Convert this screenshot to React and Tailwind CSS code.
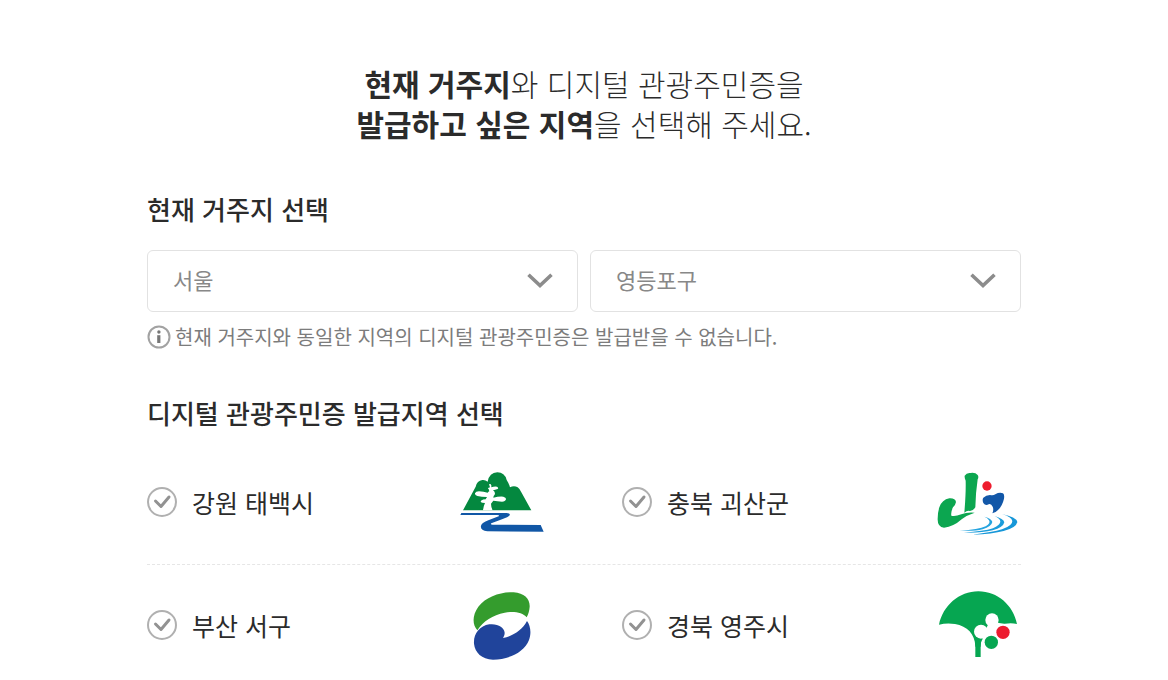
import React from "react";

function TaebaekLogo() {
  return (
    <svg viewBox="54 21 264 216" className="h-[72px] w-[88px] shrink-0" aria-hidden="true">
      <path
        fill="#04883f"
        d="M69 151 L107 80 Q111 62 127 60 Q136 59 143 65 Q148 38 172 37 Q194 37 200 60 Q207 70 210 82 Q222 76 233 82 Q240 87 244 97 L274 151 Z"
      />
      <path
        fill="#fff"
        d="M147 73 q5 -3 7 3 l0 6 q8 -3 17 -2 q6 3 2 7 q-8 3 -14 4 q5 3 6 9 q0 5 -4 8 l-1 5 q16 -4 30 -3 q9 3 8 8 q-2 7 -12 7 q-14 -1 -26 -3 l-7 9 q0 10 5 20 l-29 0 q1 -12 6 -22 l-8 -1 q-7 -2 -4 -6 q6 -4 14 -4 l4 -7 q-17 0 -29 -3 q-8 -3 -7 -8 q2 -6 12 -6 q14 1 26 4 q2 -3 5 -4 l-2 -7 q-4 -3 0 -4 l4 -1 Z"
      />
      <path
        fill="#1157a6"
        d="M64 159 H200 Q212 160 209 166 Q204 172 188 177 L154 190 Q150 193 158 194 L302 195 L311 215 L142 214 Q120 212 123 197 Q126 188 145 181 L176 169 Q180 166 172 165 L61 165 Z"
      />
    </svg>
  );
}

function GoesanLogo() {
  return (
    <svg viewBox="39 21 264 216" className="h-[72px] w-[88px] shrink-0" aria-hidden="true">
      <path
        fill="#0ca650"
        d="M134 47 Q140 37 152 39 Q166 37 173 45 Q177 50 173 58 Q167 98 166 142 Q161 151 150 153 Q142 150 133 158 Q138 100 137 62 Q133 54 134 47 Z"
      />
      <path
        fill="#0ca650"
        d="M58 142 Q66 119 88 115 Q106 114 108 126 Q107 134 99 142 Q92 156 94 167 Q104 171 124 163 Q140 156 164 158 Q141 165 125 178 Q101 200 72 203 Q52 201 53 176 Q53 157 58 142 Z"
      />
      <circle cx="201" cy="78" r="14" fill="#ee1c2e" />
      <path
        fill="#1257a8"
        d="M190 113 Q198 105 210 105 Q220 107 226 103 Q238 96 249 100 Q254 104 252 116 Q247 138 234 150 Q227 158 217 160 Q222 149 218 140 Q213 130 206 133 Q196 138 190 129 Q186 119 190 113 Z"
      />
      <path
        fill="#26a4df"
        d="M193 170 Q215 176 217 186 Q215 199 188 208 Q164 214 119 212 Q176 209 197 199 Q213 190 207 181 Q203 174 193 170 Z"
      />
      <path
        fill="#1c9ddb"
        d="M224 168 Q251 176 253 187 Q250 202 218 211 Q187 219 132 218 Q191 214 219 205 Q242 195 241 184 Q239 175 224 168 Z"
      />
      <path
        fill="#1797d8"
        d="M246 162 Q289 171 292 186 Q289 203 251 213 Q218 222 158 224 Q218 217 246 208 Q278 197 277 183 Q275 171 246 162 Z"
      />
    </svg>
  );
}

function SeoguLogo() {
  return (
    <svg viewBox="55 30 264 216" className="h-[72px] w-[88px] shrink-0" aria-hidden="true">
      <path
        fill="#349c2d"
        d="M113 151 C98 135 97 106 116 80 C140 50 184 35 222 37 C254 40 271 56 270 80 C269 92 266 103 261 112 C249 98 224 93 195 98 C159 105 131 123 113 151 Z"
      />
      <path
        fill="#20449b"
        d="M262 123 C272 136 276 158 268 180 C254 216 208 239 160 239 C126 237 106 218 103 191 C101 162 119 138 149 133 C174 130 194 142 195 158 C195 164 193 169 190 174 C220 168 248 150 262 123 Z"
      />
    </svg>
  );
}

function YeongjuLogo() {
  return (
    <svg viewBox="39 30 264 216" className="h-[72px] w-[88px] shrink-0" aria-hidden="true">
      <path
        fill="#06a651"
        d="M57 134 C69 77 117 34 175 34 C233 34 280 76 291 132 C275 128 257 129 239 136 L208 152 L186 180 Q182 186 182 196 V231 H166 V198 C165 163 142 138 105 132 C88 129 72 130 57 134 Z"
      />
      <path fill="#fff" d="M204 134 L232 128 L262 133 L236 190 L194 190 L186 172 Z" />
      <circle cx="216" cy="120" r="20" fill="#fff" />
      <circle cx="183" cy="155" r="21" fill="#fff" />
      <circle cx="249" cy="157" r="20" fill="#ed1b2f" />
      <circle cx="214" cy="187" r="20" fill="#06a651" />
      <path fill="#06a651" d="M165 174 Q174 180 185 176 Q182 188 182 200 H166 Z" />
    </svg>
  );
}

const regionRows = [
  [
    { name: "강원 태백시", Logo: TaebaekLogo },
    { name: "충북 괴산군", Logo: GoesanLogo },
  ],
  [
    { name: "부산 서구", Logo: SeoguLogo },
    { name: "경북 영주시", Logo: YeongjuLogo },
  ],
];

function Region({ name, Logo }) {
  return (
    <label className="flex cursor-pointer items-center justify-between">
      <span className="flex items-center gap-[15px] pb-0.5">
        <span className="grid size-[30px] place-items-center">
          <input
            type="checkbox"
            className="peer size-[30px] cursor-pointer appearance-none rounded-full border-2 border-[#b0b0b0] bg-white [grid-area:1/1] checked:border-[#04883f]"
          />
          <svg
            viewBox="0 0 30 30"
            className="pointer-events-none size-[30px] text-[#929292] [grid-area:1/1] peer-checked:text-[#04883f]"
            fill="none"
            stroke="currentColor"
            strokeWidth="3"
            strokeLinecap="round"
            strokeLinejoin="round"
            aria-hidden="true"
          >
            <path d="M8.5 14 L14 19.5 L22 10" />
          </svg>
        </span>
        <span className="text-[25px] leading-9 text-[#2b2b2b]">{name}</span>
      </span>
      <Logo />
    </label>
  );
}

function SelectBox({ label, options }) {
  return (
    <div className="grid items-center">
      <select
        aria-label={label}
        className="h-[62px] w-full appearance-none rounded-md border border-[#e2e2e2] bg-white pr-16 pb-1 pl-[25px] text-[22px] text-[#888888] [grid-area:1/1]"
      >
        {options.map((o) => (
          <option key={o}>{o}</option>
        ))}
      </select>
      <svg
        viewBox="0 0 26 16"
        className="pointer-events-none mr-[25px] h-4 w-[26px] justify-self-end [grid-area:1/1]"
        fill="none"
        stroke="#8c8c8c"
        strokeWidth="3.6"
        aria-hidden="true"
      >
        <path d="M1.5 1.8 L13 12.6 L24.5 1.8" />
      </svg>
    </div>
  );
}

export default function App() {
  return (
    <main
      lang="ko"
      className="mx-auto w-3/4 max-w-[874px] pt-[63px] font-['Noto_Sans_CJK_KR','Noto_Sans',sans-serif] text-[#2b2b2b]"
    >
      <h1 className="text-center text-[30px] leading-10 font-extralight">
        <strong className="font-bold">현재 거주지</strong>와 디지털 관광주민증을
        <br />
        <strong className="font-bold">발급하고 싶은 지역</strong>을 선택해 주세요.
      </h1>

      <section className="pt-[46px]">
        <h2 className="text-[26px] leading-10 font-medium">현재 거주지 선택</h2>
        <div className="mt-[21px] grid grid-cols-2 gap-3">
          <SelectBox label="시/도" options={["서울"]} />
          <SelectBox label="시/군/구" options={["영등포구"]} />
        </div>
        <p className="mt-[9px] flex items-center gap-1 text-[20px] leading-8 text-[#7c7c7c]">
          <svg viewBox="0 0 24 24" className="size-6 shrink-0" aria-hidden="true">
            <circle cx="12" cy="12" r="10.5" fill="none" stroke="#a2a2a2" strokeWidth="2" />
            <path d="M10.2 10.2 H13.4 V18 H10.2 Z" fill="#777777" />
            <circle cx="11.9" cy="7" r="1.7" fill="#777777" />
          </svg>
          현재 거주지와 동일한 지역의 디지털 관광주민증은 발급받을 수 없습니다.
        </p>
      </section>

      <section className="pt-10">
        <h2 className="text-[26px] leading-10 font-medium">디지털 관광주민증 발급지역 선택</h2>
        <ul className="mt-[9px]">
          {regionRows.map((row) => (
            <li
              key={row[0].name}
              className="grid grid-cols-2 gap-[76px] border-b border-dashed border-[#e6e6e6] py-[25px] last:border-b-0 last:pb-3"
            >
              {row.map((r) => (
                <Region key={r.name} {...r} />
              ))}
            </li>
          ))}
        </ul>
      </section>
    </main>
  );
}
